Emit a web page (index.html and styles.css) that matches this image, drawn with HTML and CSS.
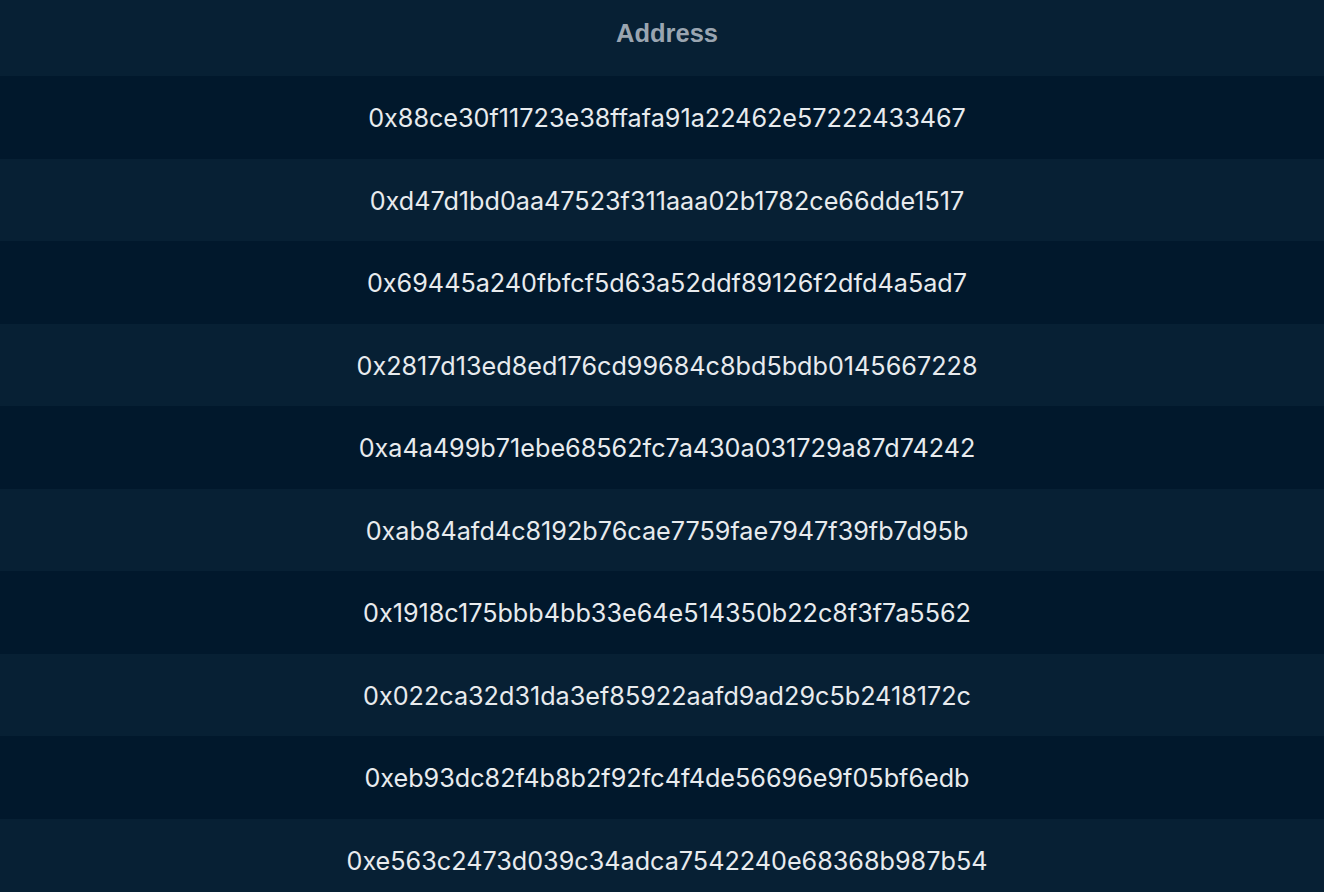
FILE: index.html
```html
<!DOCTYPE html>
<html>
<head>
<meta charset="utf-8">
<link rel="stylesheet" href="styles.css">
</head>
<body>
<div class="table">
  <div class="head">Address</div>
  <div class="row">0x88ce30f11723e38ffafa91a22462e57222433467</div>
  <div class="row">0xd47d1bd0aa47523f311aaa02b1782ce66dde1517</div>
  <div class="row">0x69445a240fbfcf5d63a52ddf89126f2dfd4a5ad7</div>
  <div class="row">0x2817d13ed8ed176cd99684c8bd5bdb0145667228</div>
  <div class="row">0xa4a499b71ebe68562fc7a430a031729a87d74242</div>
  <div class="row">0xab84afd4c8192b76cae7759fae7947f39fb7d95b</div>
  <div class="row">0x1918c175bbb4bb33e64e514350b22c8f3f7a5562</div>
  <div class="row">0x022ca32d31da3ef85922aafd9ad29c5b2418172c</div>
  <div class="row">0xeb93dc82f4b8b2f92fc4f4de56696e9f05bf6edb</div>
  <div class="row">0xe563c2473d039c34adca7542240e68368b987b54</div>
</div>
</body>
</html>
```
FILE: styles.css
```css
html, body {
  margin: 0;
  padding: 0;
  background: #011a2e;
  overflow: hidden;
}
.table {
  display: flex;
  flex-direction: column;
  width: 1324px;
}
.head {
  height: 76px;
  display: flex;
  align-items: center;
  justify-content: center;
  background: #072034;
  color: #9aa5b1;
  font-family: "Liberation Sans", Arial, sans-serif;
  font-weight: bold;
  font-size: 25.5px;
  padding: 0 0 10px 10px;
  box-sizing: border-box;
}
.row {
  height: 82.5px;
  flex: none;
  display: flex;
  align-items: center;
  justify-content: center;
  padding: 2px 0 0 10px;
  box-sizing: border-box;
  font-family: Inter, sans-serif;
  font-weight: 400;
  font-size: 25.2px;
  font-feature-settings: "calt" 1;
  color: #e8ebee;
}
.row:nth-child(even) {
  background: #01182c;
}
.row:nth-child(odd) {
  background: #072034;
}
```
